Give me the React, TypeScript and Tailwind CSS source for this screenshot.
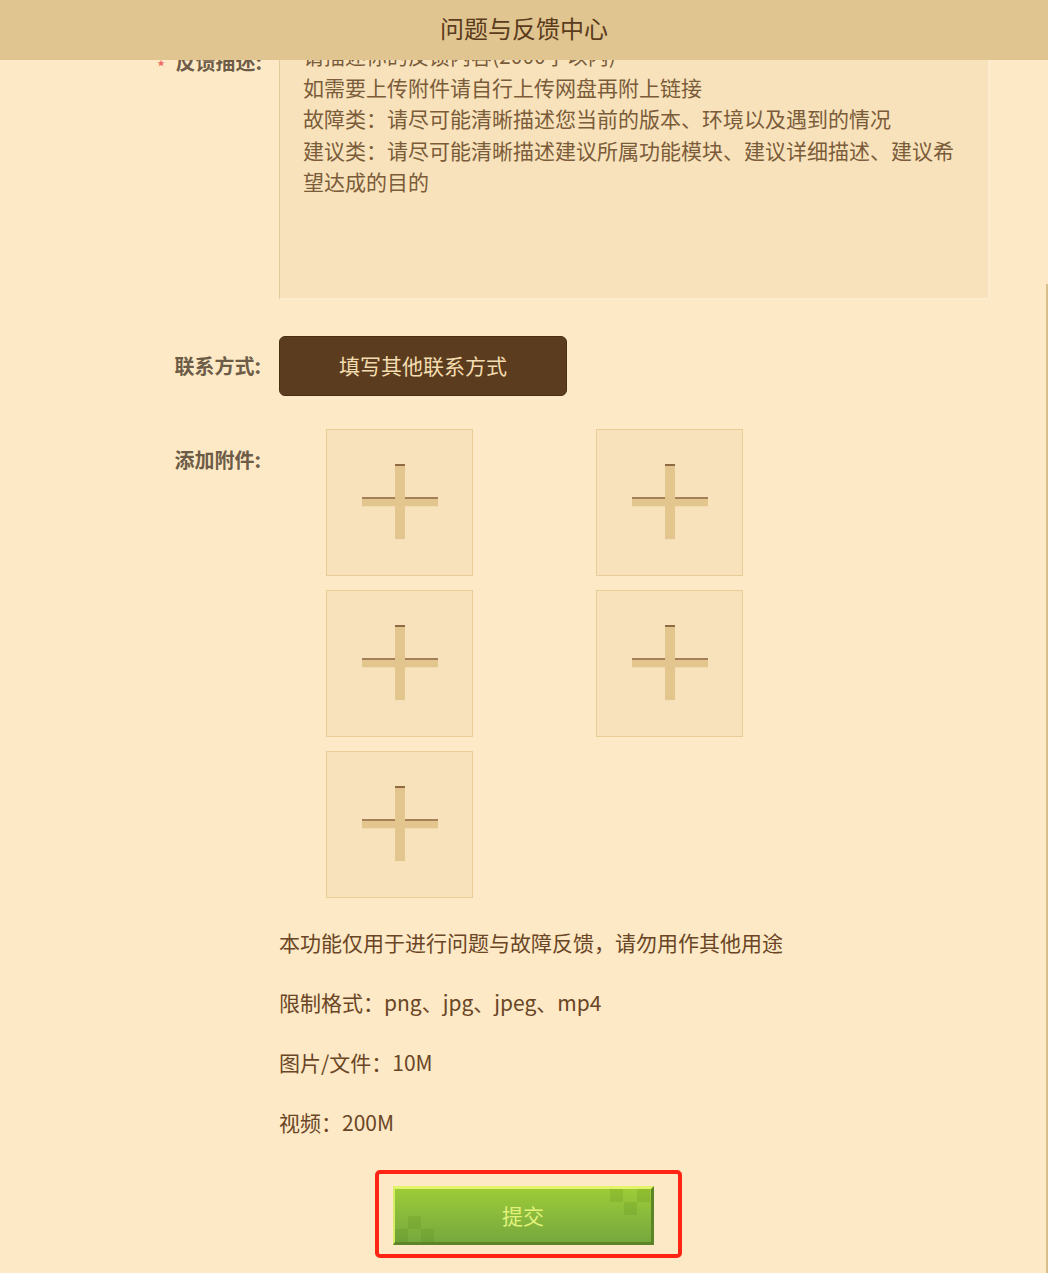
import React from "react";

function Plus() {
  return (
    <svg width="76" height="77" viewBox="0 0 76 77" aria-hidden="true">
      <rect x="0" y="33" width="76" height="10" fill="#e2c68e" />
      <rect x="0" y="33" width="76" height="2" fill="#a47f57" />
      <rect x="0" y="42" width="76" height="1" fill="#f1dcb0" />
      <rect x="33" y="0" width="10" height="76" fill="#e2c68e" />
      <rect x="33" y="0" width="10" height="2" fill="#8f6a43" />
      <rect x="33" y="75" width="10" height="1" fill="#f3e0b6" />
    </svg>
  );
}

function UploadBox() {
  return (
    <div className="w-[147px] h-[147px] bg-[#f8e2bb] border border-[#e8cd98] flex items-center justify-center">
      <Plus />
    </div>
  );
}

export default function App() {
  const font = "font-['Noto_Sans_CJK_SC','Noto_Sans',sans-serif]";
  return (
    <div className={`relative min-h-[1273px] w-[1048px] bg-[#fde9c5] flex overflow-hidden ${font}`}>
      <header className="absolute top-0 left-0 right-0 h-[60px] bg-[#e0c590] flex items-center justify-center pb-[4px] text-[24px] text-[#5a3b1c] z-10">
        问题与反馈中心
      </header>

      <main className="flex-1 pt-[30px]">
        <div className="flex">
          <div className="w-[262px] pt-[17px] flex justify-end items-start text-[20px] leading-[30px] font-bold text-[#6d5c47]">
            <span className="text-[14px] leading-[14px] text-[#ee6a62] mt-[12px] mr-[11px]">*</span>
            <span>反馈描述:</span>
          </div>
          <div className="ml-[17px] w-[711px] h-[270px] bg-[#f8e2bb] border-l border-t border-[#e2ca9a] border-r-2 border-b-2 border-r-[#fbeccf] border-b-[#fbeccf] pl-[23px] pt-[9px] text-[21px] leading-[31.5px] text-[#7b5c3a] whitespace-nowrap">
            <div>请描述你的反馈内容(2000字以内)</div>
            <div>如需要上传附件请自行上传网盘再附上链接</div>
            <div>故障类：请尽可能清晰描述您当前的版本、环境以及遇到的情况</div>
            <div>建议类：请尽可能清晰描述建议所属功能模块、建议详细描述、建议希</div>
            <div>望达成的目的</div>
          </div>
        </div>

        <div className="flex items-center mt-[36px]">
          <div className="w-[262px] text-right text-[20px] leading-[30px] font-bold text-[#6d5c47] pr-[1px]">
            联系方式:
          </div>
          <button className="ml-[17px] w-[288px] h-[60px] rounded-[6px] bg-[#5c3c1e] border border-[#4a2f15] text-[21px] text-[#f3ddb0] flex items-center justify-center">
            填写其他联系方式
          </button>
        </div>

        <div className="flex mt-[33px]">
          <div className="w-[262px] pt-[16px] text-right text-[20px] leading-[30px] font-bold text-[#6d5c47] pr-[1px]">
            添加附件:
          </div>
          <div className="ml-[64px] grid grid-cols-[147px_147px] gap-x-[123px] gap-y-[14px]">
            <UploadBox />
            <UploadBox />
            <UploadBox />
            <UploadBox />
            <UploadBox />
          </div>
        </div>

        <div className="ml-[279px] mt-[14px] text-[21px] leading-[60px] text-[#6a4526]">
          <div>本功能仅用于进行问题与故障反馈，请勿用作其他用途</div>
          <div>限制格式：png、jpg、jpeg、mp4</div>
          <div>图片/文件：10M</div>
          <div>视频：200M</div>
        </div>

        <div className="mt-[18px] ml-[375px] w-[307px] border-[4px] border-[#ff2414] rounded-[5px] pl-[14px] pr-[24px] pt-[12px] pb-[9px]">
          <button className="relative w-[261px] h-[59px] bg-gradient-to-b from-[#9dcb37] to-[#76a83e] border-t-[3px] border-l-[2px] border-t-[#e2f46a] border-l-[#d6ee66] border-r-[3px] border-b-[3px] border-r-[#5b8526] border-b-[#5b8526] flex items-center justify-center text-[21px] text-[#e2f27c] overflow-hidden">
            <span className="absolute left-[13px] bottom-[13px] w-[13px] h-[13px] bg-[#4c7a10]/[0.15]" />
            <span className="absolute left-0 bottom-0 w-[13px] h-[13px] bg-[#4c7a10]/[0.15]" />
            <span className="absolute left-[26px] bottom-0 w-[13px] h-[13px] bg-[#4c7a10]/[0.15]" />
            <span className="absolute right-[28px] top-0 w-[13px] h-[13px] bg-[#4c7a10]/[0.15]" />
            <span className="absolute right-[1px] top-0 w-[13px] h-[13px] bg-[#4c7a10]/[0.15]" />
            <span className="absolute right-[14px] top-[13px] w-[13px] h-[13px] bg-[#4c7a10]/[0.15]" />
            <span className="relative">提交</span>
          </button>
        </div>
      </main>

      <div className="w-[2px] mt-[284px] bg-[#d8bf8b]" />
    </div>
  );
}
